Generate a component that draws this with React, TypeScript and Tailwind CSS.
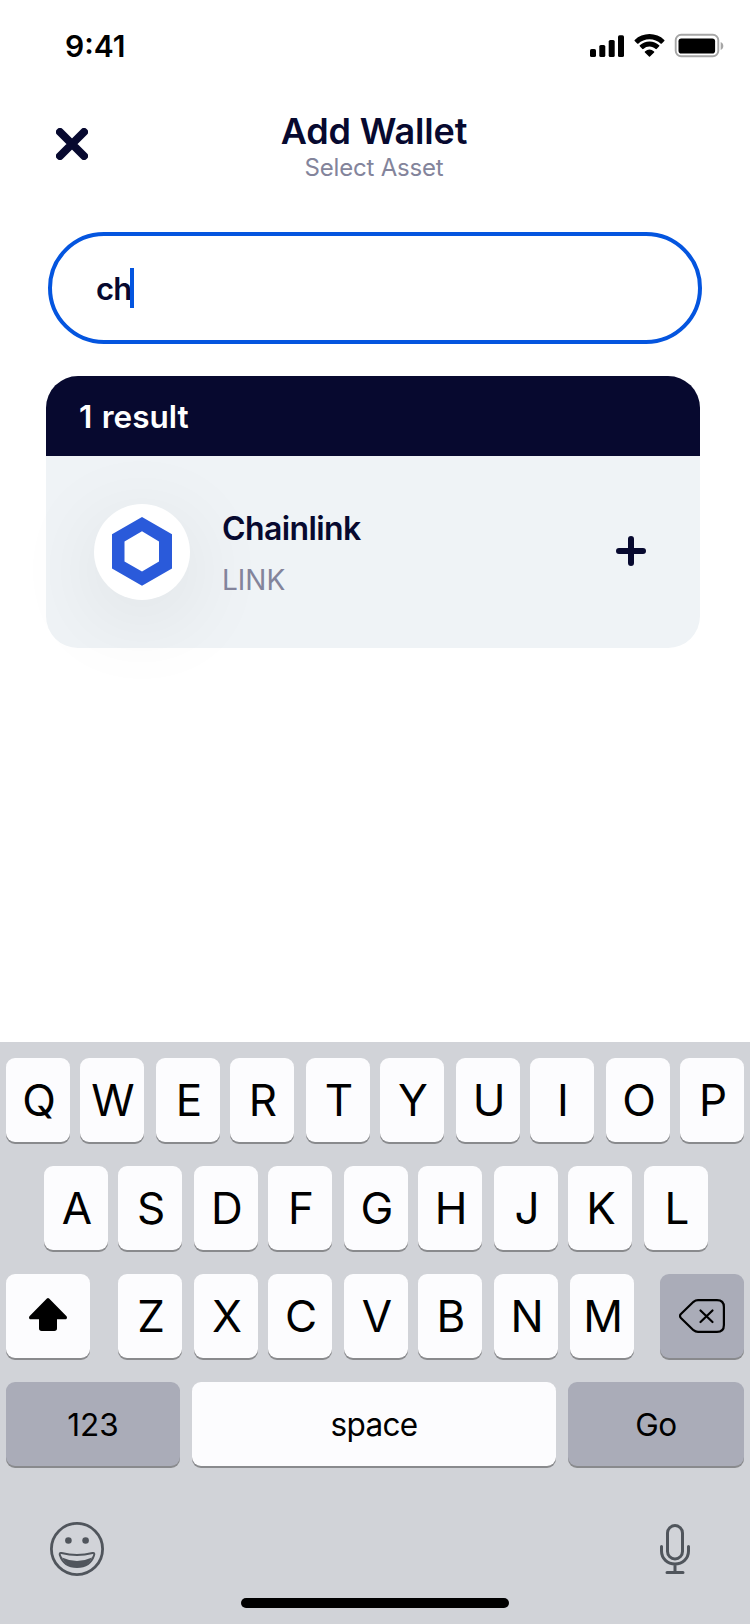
import type { ReactNode } from "react";

const ROW_ONE = ["Q", "W", "E", "R", "T", "Y", "U", "I", "O", "P"];
const ROW_TWO = ["A", "S", "D", "F", "G", "H", "J", "K", "L"];

function Key({ children, className }: { children: ReactNode; className: string }) {
  return (
    <button
      className={`flex h-[84px] shrink-0 items-center justify-center rounded-[9px] text-black shadow-[0_2px_0_#898a8d] ${className}`}
    >
      {children}
    </button>
  );
}

function Letter({ children, className = "" }: { children: string; className?: string }) {
  return (
    <Key className={`w-16 bg-[#fcfcfe] pl-0.5 text-[44px] leading-none ${className}`}>{children}</Key>
  );
}

function StatusBar() {
  return (
    <div className="flex h-[92px] items-center justify-between pr-[26px] pl-[65px]">
      <span className="text-[30px] leading-none font-semibold text-black">9:41</span>
      <svg className="h-[26px] w-[136px]" viewBox="588 33 136 26">
        <rect x="590" y="49" width="6" height="8" rx="1.6" />
        <rect x="599.3" y="45" width="6" height="12" rx="1.6" />
        <rect x="608.7" y="40" width="6" height="17" rx="1.6" />
        <rect x="618" y="35.300" width="6" height="21.700" rx="1.6" />
        <path d="M649.500 39.200c4.300 0 8.300 1.700 11.300 4.500.2.200.6.200.8 0l2.700-2.700c.3-.3.300-.7 0-1a21.400 21.400 0 0 0-29.600 0c-.3.300-.3.700 0 1l2.700 2.700c.2.200.6.200.8 0 3-2.900 7-4.500 11.300-4.500z" />
        <path d="M649.500 46.600c2.300 0 4.500.9 6.200 2.400.3.200.6.200.9 0l2.600-2.700c.3-.3.300-.7 0-1a14.200 14.200 0 0 0-19.400 0c-.3.300-.3.700 0 1l2.600 2.700c.3.200.6.200.9 0a9.300 9.300 0 0 1 6.200-2.400z" />
        <path d="M654.100 52.400c.3-.3.300-.8 0-1a7.200 7.200 0 0 0-9.200 0c-.3.200-.3.700 0 1l4.100 4.200c.3.300.7.300 1 0z" />
        <rect x="675.700" y="34.800" width="42.600" height="21.400" rx="5.500" fill="none" stroke="#a6a6a6" strokeWidth="1.900" />
        <path d="M720.700 42c1.700.7 2.600 2.100 2.600 4s-.9 3.300-2.600 4z" fill="#a6a6a6" />
        <rect x="678.500" y="38.500" width="36.600" height="15" rx="2.800" />
      </svg>
    </div>
  );
}

export default function App() {
  return (
    <main className="flex h-[1624px] w-[750px] flex-col overflow-hidden bg-white font-['Inter','Liberation_Sans',sans-serif] text-[#07092f]">
      <StatusBar />

      <header className="grid h-[140px] grid-cols-[88px_1fr_88px] items-start pt-[17px]">
        <button aria-label="Close" className="mt-[19px] ml-14 size-8">
          <svg className="size-8" viewBox="0 0 32 32" fill="none" stroke="#07092f" strokeWidth="8" strokeLinecap="round">
            <path d="M4 4 28 28M28 4 4 28" />
          </svg>
        </button>
        <div className="pr-0.5 text-center">
          <h1 className="text-[36px] leading-[44px] font-semibold tracking-[-0.15px]">Add Wallet</h1>
          <p className="text-[24px] leading-[29px] tracking-[-0.2px] text-[#83849b]">Select Asset</p>
        </div>
      </header>

      <div className="mx-12 flex h-28 shrink-0 items-center rounded-full border-4 border-[#0455df] pl-[44px]">
        <span className="w-[34px] text-[31px] leading-none font-semibold tracking-[-0.8px]">ch</span>
        <span className="h-10 w-1 bg-[#0455df]" />
      </div>

      <section className="mt-8 mr-[50px] ml-[46px]">
        <h2 className="flex h-20 items-center rounded-t-[32px] bg-[#07092f] pt-0.5 pl-[33px] text-[31.500px] font-semibold [word-spacing:1.5px] text-white">
          1 result
        </h2>
        <div className="flex h-48 items-center rounded-b-[32px] bg-[#eff3f6] pr-[54px] pl-12">
          <div className="flex size-24 items-center justify-center rounded-full bg-white shadow-[0_18px_90px_rgba(0,0,0,0.09)]">
            <svg className="mb-px h-[69px] w-[60px]" viewBox="0 0 60 69">
              <path
                fillRule="evenodd"
                fill="#2a5ada"
                d="M30 0 60 17.200V51.500L30 68.700 0 51.500V17.200ZM30 14.300 12.500 24.400V44.500L30 54.500 47 44.500V24.400Z"
              />
            </svg>
          </div>
          <div className="ml-8 flex-1 pt-[3px]">
            <p className="text-[32px] leading-[52px] font-semibold tracking-[-0.6px]">Chainlink</p>
            <p className="text-[28px] leading-[50px] text-[#83849b]">LINK</p>
          </div>
          <button aria-label="Add" className="mb-0.5 size-[30px]">
            <svg className="size-[30px]" viewBox="0 0 30 30" fill="none" stroke="#07092f" strokeWidth="6" strokeLinecap="round">
              <path d="M15 3V27M3 15H27" />
            </svg>
          </button>
        </div>
      </section>

      <div className="mt-auto flex h-[582px] shrink-0 flex-col bg-[#d1d3d8] px-1.5 pt-4">
        <div className="flex flex-col gap-6">
          <div className="flex">
            {ROW_ONE.map((k) => (
              <Letter key={k} className="not-last:odd:mr-2.5 not-last:even:mr-3">{k}</Letter>
            ))}
          </div>
          <div className="flex pl-[38px]">
            {ROW_TWO.map((k) => (
              <Letter key={k} className="not-last:odd:mr-2.5 not-last:even:mr-3">{k}</Letter>
            ))}
          </div>
          <div className="flex">
            <Key className="mr-7 w-[84px] bg-[#fcfcfe]">
              <svg className="mb-1 h-[33px] w-[38px]" viewBox="0 0 38 33">
                <path d="M17.900.6c.7-.7 1.500-.7 2.200 0L37.300 18.100c1.200 1.300.8 3.100-1 3.100H28v9c0 1.800-.9 2.700-2.700 2.700H12.700c-1.800 0-2.700-.9-2.700-2.700v-9H1.700c-1.800 0-2.200-1.800-1-3.100z" />
              </svg>
            </Key>
            <Letter className="mr-3">Z</Letter>
            <Letter className="mr-2.5">X</Letter>
            <Letter className="mr-3">C</Letter>
            <Letter className="mr-2.5">V</Letter>
            <Letter className="mr-3">B</Letter>
            <Letter className="mr-3">N</Letter>
            <Letter className="mr-[26px]">M</Letter>
            <Key className="w-[84px] bg-[#aaacb8]">
              <svg className="h-[34px] w-[46px]" viewBox="0 0 46 34" fill="none" stroke="#000" strokeWidth="2.200" strokeLinecap="round" strokeLinejoin="round">
                <path d="M19 1.100H38Q44.900 1.100 44.900 8V26Q44.900 32.900 38 32.900H19Q16.500 32.900 14.500 31.200L1.900 19Q0 17 1.900 15L14.500 2.800Q16.500 1.100 19 1.100Z" />
                <path d="M21.500 11.500 33.500 23M33.500 11.500 21.500 23" />
              </svg>
            </Key>
          </div>
          <div className="flex gap-3 text-[31.500px]">
            <Key className="w-[174px] bg-[#aaacb8] pt-0.5">123</Key>
            <Key className="w-[364px] bg-[#fcfcfe] pt-0.5 tracking-[-0.7px]">space</Key>
            <Key className="w-44 bg-[#aaacb8] pt-0.5 tracking-[-0.4px]">Go</Key>
          </div>
        </div>

        <div className="mt-14 flex items-center justify-between pr-[54px] pl-11">
          <svg className="size-[54px]" viewBox="0 0 54 54" fill="none" stroke="#50555c">
            <circle cx="27" cy="27" r="25.600" strokeWidth="2.800" />
            <circle cx="18.400" cy="18.500" r="3.300" fill="#50555c" stroke="none" />
            <circle cx="35.600" cy="18.500" r="3.300" fill="#50555c" stroke="none" />
            <path d="M11.500 31Q27 35 42.500 31C44.500 30.500 44.500 32 44 33.500C41.500 41 35 45 27 45S12.500 41 10 33.500C9.500 32 9.500 30.500 11.500 31Z" strokeWidth="2" strokeLinejoin="round" />
            <path d="M12 35.500Q27 42.500 42 35.500C39 42 34 45 27 45S15 42 12 35.500Z" fill="#50555c" stroke="none" />
          </svg>
          <svg className="h-[50px] w-[30px]" viewBox="0 0 30 50" fill="none" stroke="#50555c" strokeWidth="3" strokeLinecap="round">
            <rect x="7.500" y="1.500" width="15" height="33.500" rx="7.500" />
            <path d="M1.500 22.500V27C1.500 34.500 7.500 40 15 40S28.500 34.500 28.500 27V22.500M15 40V48M7 48.500H23" />
          </svg>
        </div>
        <div className="mt-auto mb-4 h-2.5 w-[268px] self-center rounded-full bg-black" />
      </div>
    </main>
  );
}
